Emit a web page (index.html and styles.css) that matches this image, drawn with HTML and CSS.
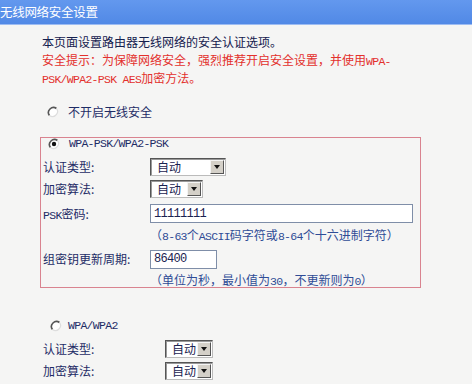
FILE: index.html
```html
<!DOCTYPE html>
<html>
<head>
<meta charset="utf-8">
<link rel="stylesheet" href="styles.css">
</head>
<body>
<div class="header"><span class="title">无线网络安全设置</span></div>
<div class="page">
  <div class="intro">
    <div class="line intro-line">本页面设置路由器无线网络的安全认证选项。</div>
    <div class="line warn">安全提示：为保障网络安全，强烈推荐开启安全设置，并使用<span class="en">WPA-</span></div>
    <div class="line warn"><span class="en">PSK/WPA2-PSK AES</span>加密方法。</div>
  </div>

  <div class="radio-row r-none">
    <svg class="radio" width="12" height="12" viewBox="0 0 12 12"><circle cx="6" cy="6" r="5" fill="#fff"/><path d="M9.5 2.5 A5 5 0 0 0 2.5 9.5" fill="none" stroke="#555" stroke-width="1.6"/><path d="M2.5 9.5 A5 5 0 0 0 9.5 2.5" fill="none" stroke="#ddd" stroke-width="1.2"/></svg>
    <span class="rlabel">不开启无线安全</span>
  </div>

  <div class="box">
    <div class="radio-row r-psk">
      <svg class="radio" width="12" height="12" viewBox="0 0 12 12"><circle cx="6" cy="6" r="5" fill="#fff"/><path d="M9.5 2.5 A5 5 0 0 0 2.5 9.5" fill="none" stroke="#555" stroke-width="1.6"/><path d="M2.5 9.5 A5 5 0 0 0 9.5 2.5" fill="none" stroke="#ddd" stroke-width="1.2"/><circle cx="6" cy="6" r="2.2" fill="#111"/></svg>
      <span class="rlabel en">WPA-PSK/WPA2-PSK</span>
    </div>
    <div class="row r1">
      <span class="label">认证类型:</span>
      <div class="select s-wide"><span class="sval">自动</span><span class="sbtn"><i></i></span></div>
    </div>
    <div class="row r2">
      <span class="label">加密算法:</span>
      <div class="select s-narrow"><span class="sval">自动</span><span class="sbtn"><i></i></span></div>
    </div>
    <div class="row r3">
      <span class="label"><span class="en">PSK</span>密码:</span>
      <div class="input i-psk"><span class="en">11111111</span></div>
    </div>
    <div class="row r4">
      <span class="label"></span>
      <span class="hint">（<span class="en">8-63</span>个<span class="en">ASCII</span>码字符或<span class="en">8-64</span>个十六进制字符）</span>
    </div>
    <div class="row r5">
      <span class="label">组密钥更新周期:</span>
      <div class="input i-period"><span class="en">86400</span></div>
    </div>
    <div class="row r6">
      <span class="label"></span>
      <span class="hint">（单位为秒，最小值为<span class="en">30</span>，不更新则为<span class="en">0</span>）</span>
    </div>
  </div>

  <div class="radio-row r-wpa">
    <svg class="radio" width="12" height="12" viewBox="0 0 12 12"><circle cx="6" cy="6" r="5" fill="#fff"/><path d="M9.5 2.5 A5 5 0 0 0 2.5 9.5" fill="none" stroke="#555" stroke-width="1.6"/><path d="M2.5 9.5 A5 5 0 0 0 9.5 2.5" fill="none" stroke="#ddd" stroke-width="1.2"/></svg>
    <span class="rlabel en">WPA/WPA2</span>
  </div>
  <div class="row b1">
    <span class="label label-wide">认证类型:</span>
    <div class="select s-small"><span class="sval">自动</span><span class="sbtn"><i></i></span></div>
  </div>
  <div class="row b2">
    <span class="label label-wide">加密算法:</span>
    <div class="select s-small"><span class="sval">自动</span><span class="sbtn"><i></i></span></div>
  </div>
</div>
</body>
</html>
```
FILE: styles.css
```css
html, body {
  margin: 0;
  padding: 0;
}
body {
  width: 472px;
  height: 384px;
  overflow: hidden;
  background: #f5f5f4;
  font-family: "Noto Sans CJK SC", "Noto Sans", sans-serif;
  font-size: 12px;
  color: #1e2c66;
}
.en {
  font-family: "Liberation Mono", "DejaVu Sans Mono", monospace;
  font-size: 11.5px;
  letter-spacing: -0.7px;
  line-height: 1;
}
.header {
  height: 24px;
  background: linear-gradient(#6398ee, #5189e6);
  border-bottom: 1px solid #9dbcf2;
  display: flex;
  align-items: center;
  overflow: hidden;
}
.title {
  color: #fff;
  font-size: 12.5px;
  letter-spacing: -0.3px;
  line-height: 16px;
}
.page {
  padding-left: 40px;
}
.intro {
  padding-top: 8px;
  padding-left: 2px;
}
.line {
  height: 18px;
  line-height: 18px;
  white-space: nowrap;
}
.intro-line {
  color: #14204e;
}
.warn {
  color: #e3302c;
}
.radio-row {
  display: flex;
  align-items: center;
  height: 16px;
  line-height: 16px;
}
.radio {
  flex: none;
}
.rlabel {
  color: #1e2c66;
}
.r-none {
  margin-top: 17px;
  padding-left: 7px;
}
.r-none .rlabel { margin-left: 9px; }
.box {
  margin-top: 17px;
  width: 379px;
  height: 149px;
  border: 1px solid #d9838f;
  overflow: hidden;
}
.r-psk {
  height: 12px;
  line-height: 12px;
  padding-left: 7px;
  margin-top: 0;
}
.r-psk .rlabel { margin-left: 9px; }
.row {
  display: flex;
  align-items: center;
  line-height: 16px;
}
.label {
  width: 109px;
  flex: none;
  padding-left: 2px;
  box-sizing: border-box;
  color: #1e2c66;
  white-space: nowrap;
}
.label-wide {
  width: 125px;
  padding-left: 3px;
}
.r1 { margin-top: 7px; height: 20px; }
.r2 { margin-top: 2px; height: 20px; }
.r3 { margin-top: 4px; height: 21px; }
.r4 { margin-top: 3px; height: 18px; }
.r5 { margin-top: 4px; height: 20px; }
.r6 { margin-top: 6px; height: 12px; }
.hint {
  color: #2f4c96;
  line-height: 12px;
  white-space: nowrap;
}
.select {
  display: flex;
  align-items: stretch;
  box-sizing: border-box;
  height: 18px;
  background: #fff;
  border-top: 1px solid #555;
  border-left: 1px solid #555;
  border-right: 1px solid #bbb;
  border-bottom: 1px solid #bbb;
  box-shadow: inset 1px 1px 0 #999;
}
.sval {
  flex: 1;
  padding-left: 6px;
  line-height: 16px;
  color: #1a2250;
}
.sbtn {
  width: 14px;
  margin: 1px;
  background: #d4d0c8;
  border-top: 1px solid #f4f4f4;
  border-left: 1px solid #f4f4f4;
  border-right: 1px solid #555;
  border-bottom: 1px solid #555;
  box-sizing: border-box;
  display: flex;
  align-items: center;
  justify-content: center;
}
.sbtn i {
  width: 0;
  height: 0;
  border-left: 3.5px solid transparent;
  border-right: 3.5px solid transparent;
  border-top: 4px solid #111;
}
.s-wide { width: 76px; }
.s-narrow { width: 53px; }
.s-small { width: 48px; height: 18px; }
.input {
  box-sizing: border-box;
  height: 19px;
  background: #fff;
  border: 1px solid #7f8ea8;
  padding-left: 3px;
  display: flex;
  align-items: center;
  color: #1a2250;
}
.input .en { font-size: 12px; }
.i-psk { width: 263px; }
.i-period { width: 67px; }
.r-wpa {
  margin-top: 30px;
  padding-left: 10px;
}
.r-wpa .rlabel { margin-left: 6px; }
.b1 { margin-top: 5px; height: 19px; }
.b2 { margin-top: 3px; height: 20px; }
```
